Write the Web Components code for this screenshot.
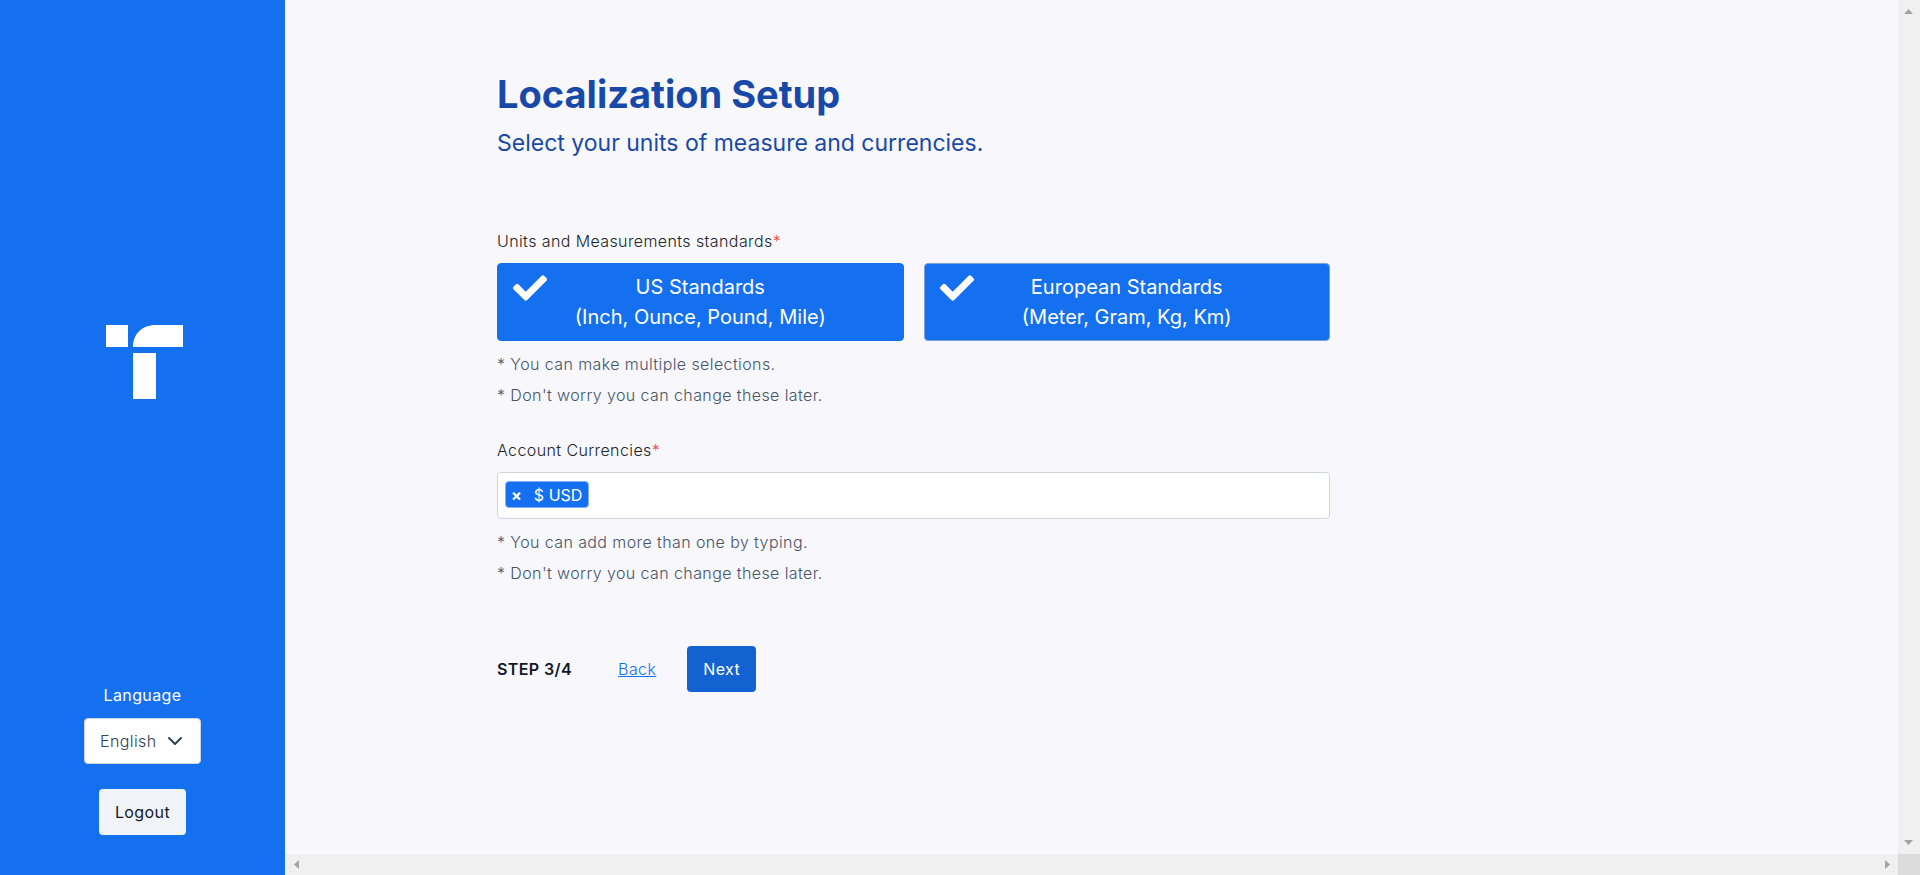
<!DOCTYPE html>
<html lang="en">
<head>
<meta charset="utf-8">
<title>Localization Setup</title>
<style>
  html, body { margin: 0; height: 100%; }
  body { font-family: Inter, "Liberation Sans", sans-serif; font-size: 16px; line-height: 24px; letter-spacing: 0.025em; color: #212529; overflow: hidden; }
</style>
</head>
<body>
<setup-page></setup-page>

<template id="setup-page">
  <style>
    :host { display: grid; grid-template-columns: 285px minmax(0, 1fr); height: 100%; background: #f8f8fc; }
  </style>
  <side-panel></side-panel>
  <scroll-frame>
    <localization-form></localization-form>
  </scroll-frame>
</template>

<template id="side-panel">
  <style>
    :host { display: flex; flex-direction: column; align-items: center; box-sizing: border-box; padding-bottom: 40px; background: #1570ef; color: #fff; }
    .brand { flex: 1; display: flex; align-items: center; padding-top: 42px; }
    .brand svg { display: block; margin-left: 4px; }
    label { font-size: 16px; line-height: 24px; margin-bottom: 11px; }
    .select { display: grid; width: 117px; margin-bottom: 25px; }
    .select > * { grid-area: 1 / 1; }
    select { appearance: none; box-sizing: border-box; width: 100%; height: 46px; margin: 0; padding: 0 15px; border: 1px solid #d0d5dd; border-radius: 4px; background: #fff; color: #344054; font: 300 16px/24px Inter, sans-serif; letter-spacing: inherit; }
    .select svg { justify-self: end; align-self: center; margin-right: 18px; pointer-events: none; }
    button { height: 46px; padding: 0 16px; border: 0; border-radius: 4px; background: #f0f4f9; color: #101828; font: 400 16px/24px Inter, sans-serif; letter-spacing: inherit; }
  </style>
  <div class="brand">
    <svg width="78" height="76" viewBox="0 0 78 76" fill="#fff" role="img" aria-label="Logo">
      <path d="M0 0H22V22H0ZM27 22C27 9 36 0 50 0H77V22ZM27 28H50V74H27Z"/>
    </svg>
  </div>
  <label for="lang">Language</label>
  <div class="select">
    <select id="lang"><option>English</option></select>
    <svg width="16" height="16" viewBox="0 0 16 16" fill="none" stroke="#344054" stroke-width="2" stroke-linecap="round" stroke-linejoin="round"><path d="M2 5l6 6 6-6"/></svg>
  </div>
  <button type="button">Logout</button>
</template>

<template id="scroll-frame">
  <style>
    :host { display: grid; grid-template-columns: minmax(0, 1fr) 22px; grid-template-rows: minmax(0, 1fr) 21px; min-height: 0; }
    .view { overflow: hidden; }
    .bar { display: flex; justify-content: space-between; align-items: center; background: #f0f0f0; }
    .v { flex-direction: column; padding: 9px 1px 9px 0; }
    .h { padding: 0 8px 0 9px; }
    .corner { background: #dcdcdc; }
    svg { display: block; fill: #a3a3a3; }
  </style>
  <div class="view"><slot></slot></div>
  <div class="bar v">
    <svg width="9" height="5" viewBox="0 0 9 5"><path d="M0 5L4.500 0 9 5Z"/></svg>
    <svg width="9" height="5" viewBox="0 0 9 5"><path d="M0 0L4.500 5 9 0Z"/></svg>
  </div>
  <div class="bar h">
    <svg width="5" height="9" viewBox="0 0 5 9"><path d="M5 0L0 4.500 5 9Z"/></svg>
    <svg width="5" height="9" viewBox="0 0 5 9"><path d="M0 0L5 4.500 0 9Z"/></svg>
  </div>
  <div class="corner"></div>
</template>

<template id="localization-form">
  <style>
    :host { display: grid; grid-template-columns: 212fr 833fr 568fr; }
    form { grid-column: 2; padding-top: 70px; }
    h1 { margin: 0; font-size: 38px; line-height: 48px; font-weight: 700; letter-spacing: normal; color: #1849a9; }
    h2 { margin: 9px 0 0; font-size: 23px; line-height: 32px; font-weight: 400; letter-spacing: normal; color: #1849a9; }
    form-field { margin-top: 70px; }
    form-field + form-field { margin-top: 31px; }
    .options { display: grid; grid-template-columns: 1fr 1fr; gap: 20px; }
    .actions { display: flex; align-items: center; margin-top: 61px; }
    .step { font-weight: 600; color: #101828; }
    a { margin: 0 31px 0 46px; font-weight: 300; color: #1570ef; text-decoration: underline; }
    button { height: 46px; padding: 0 16px; border: 0; border-radius: 4px; background: #1462d2; color: #fff; font: 400 16px/24px Inter, sans-serif; letter-spacing: inherit; }
  </style>
  <form>
    <h1>Localization Setup</h1>
    <h2>Select your units of measure and currencies.</h2>
    <form-field label="Units and Measurements standards">
      <div class="options">
        <option-card>US Standards<br>(Inch, Ounce, Pound, Mile)</option-card>
        <option-card outlined>European Standards<br>(Meter, Gram, Kg, Km)</option-card>
      </div>
      <span slot="hint">* You can make multiple selections.</span>
      <span slot="hint">* Don't worry you can change these later.</span>
    </form-field>
    <form-field label="Account Currencies">
      <tag-input label="Account Currencies"></tag-input>
      <span slot="hint">* You can add more than one by typing.</span>
      <span slot="hint">* Don't worry you can change these later.</span>
    </form-field>
    <div class="actions">
      <span class="step">STEP 3/4</span>
      <a href="#">Back</a>
      <button type="button">Next</button>
    </div>
  </form>
</template>

<template id="form-field">
  <style>
    :host { display: block; }
    .label { margin-bottom: 10px; font-weight: 300; color: #212529; }
    .label i { font-style: normal; color: #f04438; }
    .hints { display: grid; gap: 7px; padding-top: 11px; font-weight: 300; color: #475467; }
  </style>
  <div class="label"><span id="text"></span><i>*</i></div>
  <slot></slot>
  <div class="hints"><slot name="hint"></slot></div>
</template>

<template id="option-card">
  <style>
    :host { display: block; letter-spacing: normal; }
    label { position: relative; display: block; box-sizing: border-box; padding: 8px; border: 1px solid #1570ef; border-radius: 4px; background: #1570ef; color: #fff; font-size: 20px; line-height: 30px; text-align: center; }
    :host([outlined]) label { border-color: #7f9fdc; }
    input { position: absolute; inset: 0; margin: 0; opacity: 0; }
    svg { position: absolute; left: 15px; top: 7px; }
    input:not(:checked) + svg { display: none; }
  </style>
  <label><input type="checkbox" checked><svg width="34" height="34" viewBox="0 0 512 512" fill="#fff"><path d="M173.898 439.404l-166.400-166.400c-9.997-9.997-9.997-26.206 0-36.204l36.203-36.204c9.997-9.998 26.207-9.998 36.204 0L192 312.690 432.095 72.596c9.997-9.997 26.207-9.997 36.204 0l36.203 36.204c9.997 9.997 9.997 26.206 0 36.204l-294.400 294.401c-9.998 9.997-26.207 9.997-36.204-.001z"/></svg><slot></slot></label>
</template>

<template id="tag-input">
  <style>
    :host { display: flex; align-items: flex-start; box-sizing: border-box; height: 47px; padding: 8px 7px; border: 1px solid #d0d5dd; border-radius: 4px; background: #fff; letter-spacing: normal; }
    .tag { display: flex; align-items: center; gap: 12px; height: 25px; padding: 0 6px 0 5px; border: 1px solid #84adff; border-radius: 4px; background: #1570ef; color: #fff; }
    button { padding: 0; border: 0; background: none; color: #fff; font: 700 16px/24px Inter, sans-serif; }
    input { flex: 1; min-width: 0; height: 27px; padding: 0 8px; border: 0; outline: 0; background: none; font: inherit; }
  </style>
  <span class="tag"><button type="button" aria-label="Remove $ USD">×</button><span>$ USD</span></span>
  <input type="text">
</template>

<script>
  class TemplateElement extends HTMLElement {
    constructor() {
      super();
      const root = this.attachShadow({ mode: 'open' });
      root.append(document.getElementById(this.localName).content.cloneNode(true));
    }
  }
  class FormField extends TemplateElement {
    connectedCallback() {
      this.shadowRoot.getElementById('text').textContent = this.getAttribute('label');
    }
  }
  class TagInput extends TemplateElement {
    connectedCallback() {
      this.shadowRoot.querySelector('input').setAttribute('aria-label', this.getAttribute('label'));
    }
  }
  customElements.define('option-card', class extends TemplateElement {});
  customElements.define('tag-input', TagInput);
  customElements.define('form-field', FormField);
  customElements.define('localization-form', class extends TemplateElement {});
  customElements.define('scroll-frame', class extends TemplateElement {});
  customElements.define('side-panel', class extends TemplateElement {});
  customElements.define('setup-page', class extends TemplateElement {});
</script>
</body>
</html>
